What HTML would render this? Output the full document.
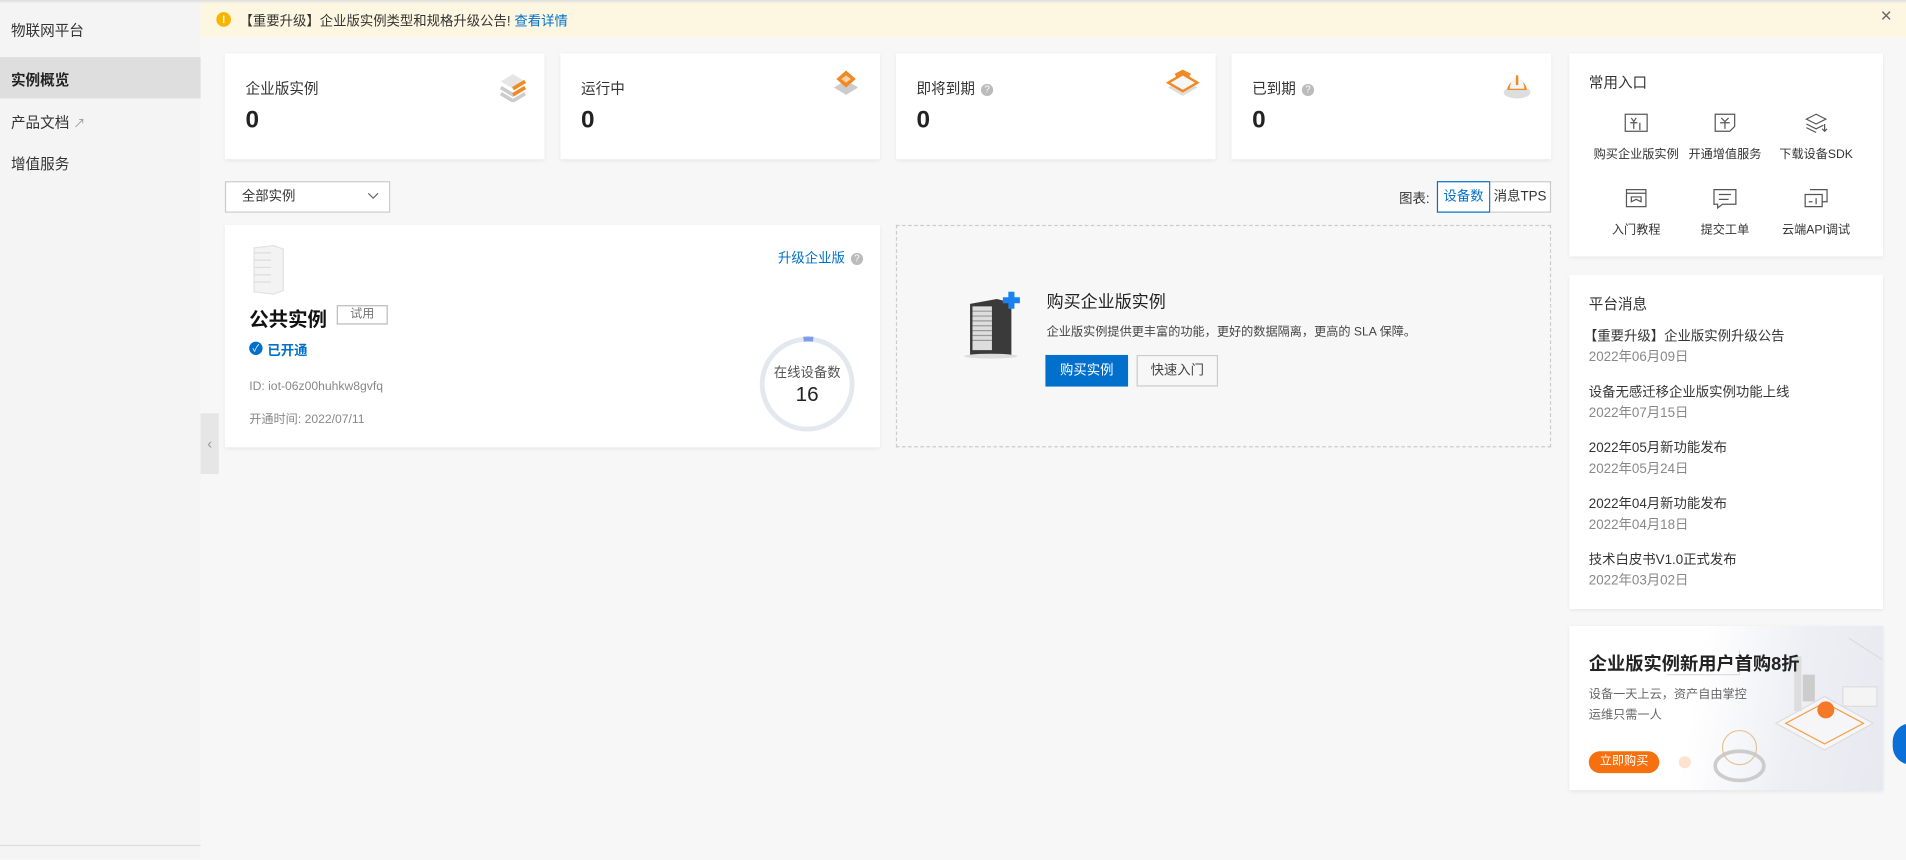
<!DOCTYPE html>
<html><head><meta charset="utf-8"><style>
*{margin:0;padding:0;box-sizing:border-box}
html,body{width:1906px;height:860px;overflow:hidden;background:#f7f7f7}
#w{position:absolute;left:0;top:0;width:1568px;height:707px;transform:scale(1.2156);transform-origin:0 0;font-family:"Liberation Sans","Noto Sans CJK SC",sans-serif;color:#333;font-size:12px}
.a{position:absolute}
.card{position:absolute;background:#fff;box-shadow:0 1px 3px rgba(0,0,0,.08)}
.sb{left:0;top:0;width:165px;height:707px;background:#f4f4f4}
.sb div{position:absolute;left:9px;font-size:12px;color:#333}
.st .t{position:absolute;left:17px;top:20px;font-size:12px;color:#333}
.st .n{position:absolute;left:17px;top:44px;font-size:20px;font-weight:bold;color:#222}
.q{display:inline-block;width:10px;height:10px;border-radius:50%;background:#bbb;color:#fff;font-size:8px;line-height:10px;text-align:center;vertical-align:1px;margin-left:5px}
.ent{position:absolute;width:80px;text-align:center;font-size:10px;color:#333}
.ent svg{display:block;margin:0 auto 8px}
.msg{position:absolute;left:16px;font-size:11px;color:#333;line-height:17px}
.msg span{color:#888;display:block}
</style></head><body><div id="w">
<div class="a sb">
<div style="top:16px">物联网平台</div>
<div style="left:0;top:47px;width:165px;height:34px;background:#dedede"></div>
<div style="top:57px;font-weight:bold;color:#222">实例概览</div>
<div style="top:92px">产品文档 <span style="color:#999;font-size:10px">↗</span></div>
<div style="top:126px">增值服务</div>
<div style="left:0;top:695px;width:165px;height:1px;background:#ddd"></div>
</div>
<div class="a" style="left:165px;top:340px;width:15px;height:50px;background:#e6e6e6;color:#999;font-size:12px;text-align:center;line-height:50px">‹</div>
<div class="a" style="left:165px;top:0;width:1403px;height:31px;background:#fdf7e1"></div>
<div class="a" style="left:0;top:0;width:1568px;height:3px;background:linear-gradient(#ddd,transparent)"></div>
<div class="a" style="left:178px;top:10px;width:12px;height:12px;border-radius:50%;background:#f7b500;color:#fff;font-size:9px;font-weight:bold;text-align:center;line-height:12px">!</div>
<div class="a" style="left:197px;top:9px;font-size:11px">【重要升级】企业版实例类型和规格升级公告! <span style="color:#0070cc">查看详情</span></div>
<div class="a" style="left:1547px;top:5px;font-size:16px;color:#666">×</div>

<div class="card st" style="left:185px;top:44px;width:263px;height:87px"><div class="t">企业版实例</div><div class="n">0</div>
<svg class="a" style="left:224px;top:14px" width="26" height="26"><path d="M3 9l10-6 10 6-10 6z" fill="#e6e6e6"/><path d="M3 14l10 6 10-6M3 19l10 6 10-6" stroke="#ccc" stroke-width="3" fill="none"/><path d="M13 15l10-6M13 20l10-6" stroke="#f08a24" stroke-width="3"/></svg></div>
<div class="card st" style="left:461px;top:44px;width:263px;height:87px"><div class="t">运行中</div><div class="n">0</div>
<svg class="a" style="left:222px;top:12px" width="26" height="28"><path d="M3 16l10-6 10 6-10 6z" fill="#ccc"/><path d="M13 2l8 7-8 7-8-7z" fill="#f08a24"/><path d="M13 6l4 3-4 3-4-3z" fill="#ffd0a0"/></svg></div>
<div class="card st" style="left:737px;top:44px;width:263px;height:87px"><div class="t">即将到期<span class="q">?</span></div><div class="n">0</div>
<svg class="a" style="left:222px;top:12px" width="28" height="28"><path d="M2 16l12-7 12 7-12 7z" fill="#ddd"/><path d="M2 12l12-7 12 7-12 7z" fill="#f6f6f6" stroke="#f08a24" stroke-width="2"/><path d="M8 6l6-3 6 3" stroke="#f08a24" stroke-width="3" fill="none"/></svg></div>
<div class="card st" style="left:1013px;top:44px;width:263px;height:87px"><div class="t">已到期<span class="q">?</span></div><div class="n">0</div>
<svg class="a" style="left:222px;top:12px" width="26" height="28"><ellipse cx="13" cy="20" rx="11" ry="5" fill="#ddd"/><path d="M5 18a8 8 0 0 1 16 0" fill="#f08a24"/><path d="M7 17a6 9 0 0 1 12 0z" fill="#f4f4f4"/><rect x="12" y="6" width="2" height="8" fill="#f08a24"/></svg></div>

<div class="a" style="left:185px;top:149px;width:136px;height:26px;background:#fff;border:1px solid #ccc;font-size:11px;line-height:24px;padding-left:13px">全部实例<svg style="position:absolute;right:8px;top:8px" width="10" height="7"><path d="M1 1l4 4 4-4" stroke="#666" fill="none"/></svg></div>
<div class="a" style="left:1151px;top:155px;font-size:11px">图表:</div>
<div class="a" style="left:1182px;top:149px;width:44px;height:26px;border:1px solid #0070cc;background:#fff;color:#0070cc;font-size:11px;line-height:24px;text-align:center">设备数</div>
<div class="a" style="left:1226px;top:149px;width:50px;height:26px;border:1px solid #ccc;border-left:none;background:#fff;font-size:11px;line-height:24px;text-align:center">消息TPS</div>

<div class="card" style="left:185px;top:185px;width:539px;height:183px">
<svg class="a" style="left:20px;top:15px" width="36" height="44"><path d="M4 4l16-2 8 3v34l-8 3-16-2z" fill="#f3f3f3" stroke="#e2e2e2"/><path d="M4 8h14M4 14h14M4 20h14M4 26h14M4 32h14" stroke="#ddd"/></svg>
<div class="a" style="left:20px;top:64px;font-size:16px;font-weight:bold;color:#111">公共实例</div>
<div class="a" style="left:92px;top:66px;width:42px;height:16px;border:1px solid #bbb;font-size:10px;color:#777;text-align:center;line-height:14px">试用</div>
<div class="a" style="left:20px;top:96px;width:11px;height:11px;border-radius:50%;background:#0070cc;color:#fff;font-size:8px;line-height:11px;text-align:center">✓</div>
<div class="a" style="left:35px;top:95px;font-size:11px;color:#0070cc;font-weight:bold">已开通</div>
<div class="a" style="left:20px;top:128px;font-size:10px;color:#888">ID: iot-06z00huhkw8gvfq</div>
<div class="a" style="left:20px;top:151px;font-size:10px;color:#888">开通时间: 2022/07/11</div>
<div class="a" style="left:455px;top:19px;font-size:11px;color:#0070cc">升级企业版<span class="q">?</span></div>
<svg class="a" style="left:438px;top:90px" width="82" height="82"><circle cx="41" cy="41" r="37" fill="none" stroke="#e3e8ef" stroke-width="4"/><path d="M38 4a37 37 0 0 1 8 0" stroke="#7c9ce8" stroke-width="4" fill="none"/></svg>
<div class="a" style="left:438px;top:113px;width:82px;text-align:center;font-size:11px;color:#555">在线设备数</div>
<div class="a" style="left:438px;top:130px;width:82px;text-align:center;font-size:17px;color:#222">16</div>
</div>

<div class="a" style="left:737px;top:185px;width:539px;height:183px;border:1px dashed #ccc"></div>
<svg class="a" style="left:792px;top:238px" width="60" height="58"><path d="M6 12l22-4 12 3v45H6z" fill="#3a3a3a"/><path d="M8 14h16v36H8z" fill="#ddd"/><path d="M8 18h16M8 22h16M8 26h16M8 30h16M8 34h16M8 38h16M8 42h16" stroke="#999"/><path d="M40 2v14M33 9h14" stroke="#1a82f0" stroke-width="5"/><ellipse cx="23" cy="55" rx="22" ry="2" fill="#ddd"/></svg>
<div class="a" style="left:861px;top:238px;font-size:14px;color:#222">购买企业版实例</div>
<div class="a" style="left:861px;top:264px;font-size:10px;color:#444">企业版实例提供更丰富的功能，更好的数据隔离，更高的 SLA 保障。</div>
<div class="a" style="left:860px;top:292px;width:68px;height:26px;background:#0070cc;color:#fff;font-size:11px;line-height:26px;text-align:center">购买实例</div>
<div class="a" style="left:935px;top:292px;width:67px;height:26px;background:#f7f7f7;border:1px solid #ccc;font-size:11px;line-height:24px;text-align:center;color:#444">快速入门</div>

<div class="card" style="left:1291px;top:44px;width:258px;height:167px">
<div class="a" style="left:16px;top:15px;font-size:12px">常用入口</div>
<div class="ent" style="left:15px;top:48px"><svg width="20" height="18"><rect x="1" y="2" width="18" height="14" fill="none" stroke="#555"/><path d="M6 5l2 3 2-3M5 9h6M8 8v6M13 9v6" stroke="#555" fill="none"/></svg>购买企业版实例</div>
<div class="ent" style="left:88px;top:48px"><svg width="20" height="18"><path d="M2 2h16v10l-4 4H2z" fill="none" stroke="#555"/><path d="M7 5l3 3 3-3M6 9h8M10 8v6" stroke="#555" fill="none"/></svg>开通增值服务</div>
<div class="ent" style="left:163px;top:48px"><svg width="20" height="18"><path d="M2 6l8-4 8 4-8 4z M2 10l8 4 6-3M2 13l8 4" stroke="#555" fill="none"/><path d="M17 10v6M15 14l2 2 2-2" stroke="#555" fill="none"/></svg>下载设备SDK</div>
<div class="ent" style="left:15px;top:110px"><svg width="20" height="18"><rect x="2" y="2" width="16" height="14" fill="none" stroke="#555"/><path d="M2 5h16M6 8h8v4l-4-2-4 2z" stroke="#555" fill="none"/></svg>入门教程</div>
<div class="ent" style="left:88px;top:110px"><svg width="20" height="18"><path d="M1 2h18v12H8l-4 3v-3H1z M5 6h10M5 10h8" stroke="#555" fill="none"/></svg>提交工单</div>
<div class="ent" style="left:163px;top:110px"><svg width="20" height="18"><path d="M5 2h14v10H15M1 6h14v10H1z M4 12h3M10 9v5" stroke="#555" fill="none"/></svg>云端API调试</div>
</div>

<div class="card" style="left:1291px;top:226px;width:258px;height:275px">
<div class="a" style="left:16px;top:15px;font-size:12px">平台消息</div>
<div class="msg" style="left:12px;top:43px">【重要升级】企业版实例升级公告<span style="padding-left:4px">2022年06月09日</span></div>
<div class="msg" style="top:89px">设备无感迁移企业版实例功能上线<span>2022年07月15日</span></div>
<div class="msg" style="top:135px">2022年05月新功能发布<span>2022年05月24日</span></div>
<div class="msg" style="top:181px">2022年04月新功能发布<span>2022年04月18日</span></div>
<div class="msg" style="top:227px">技术白皮书V1.0正式发布<span>2022年03月02日</span></div>
</div>

<div class="card" style="left:1291px;top:515px;width:258px;height:135px;overflow:hidden;background:linear-gradient(100deg,#fff 40%,#eeeff5 70%,#e8e9f0)">
<svg class="a" style="left:80px;top:0" width="178" height="135"><path d="M90 80l40-22 40 22-40 22z" fill="#f6f6f8" stroke="#ddd"/><path d="M98 80l32-17 32 17-32 17z" fill="none" stroke="#f5a04a"/><rect x="105" y="25" width="6" height="45" fill="#ddd"/><rect x="112" y="40" width="10" height="22" fill="#ccc"/><circle cx="131" cy="69" r="7" fill="#f6792a"/><rect x="145" y="50" width="28" height="16" fill="#f4f4f4" stroke="#ddd"/><ellipse cx="60" cy="115" rx="20" ry="12" fill="none" stroke="#ccc" stroke-width="3"/><circle cx="60" cy="100" r="14" fill="none" stroke="#e2c49a"/><circle cx="15" cy="112" r="5" fill="#fde3cf"/><path d="M0 40h60v-20M150 10l28 18" stroke="#ddd" fill="none"/></svg>
<div class="a" style="left:16px;top:20px;font-size:15px;font-weight:bold;color:#222">企业版实例新用户首购8折</div>
<div class="a" style="left:16px;top:48px;font-size:10px;color:#666;line-height:17px">设备一天上云，资产自由掌控<br>运维只需一人</div>
<div class="a" style="left:16px;top:103px;width:58px;height:18px;border-radius:9px;background:#f6700f;color:#fff;font-size:10px;text-align:center;line-height:18px">立即购买</div>
</div>
<div class="a" style="left:1557px;top:595px;width:30px;height:34px;border-radius:17px;background:#0a6fd6"></div>
</div></body></html>
